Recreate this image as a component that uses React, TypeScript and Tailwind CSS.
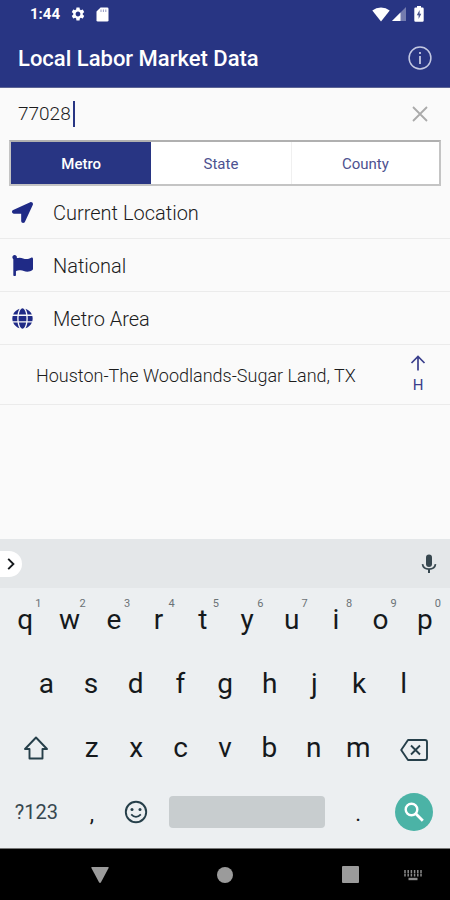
import { useState } from 'react';
import { FaFlag, FaGlobe, FaLocationArrow } from 'react-icons/fa';
import { MdSettings } from 'react-icons/md';

const tabs = ['Metro', 'State', 'County'];

const places = [
  { label: 'Current Location', icon: FaLocationArrow },
  { label: 'National', icon: FaFlag },
  { label: 'Metro Area', icon: FaGlobe },
];

const topRow = [
  ['q', '1'],
  ['w', '2'],
  ['e', '3'],
  ['r', '4'],
  ['t', '5'],
  ['y', '6'],
  ['u', '7'],
  ['i', '8'],
  ['o', '9'],
  ['p', '0'],
];
const middleRow = ['a', 's', 'd', 'f', 'g', 'h', 'j', 'k', 'l'];
const bottomRow = ['z', 'x', 'c', 'v', 'b', 'n', 'm'];

function StatusBar() {
  return (
    <div className="flex h-7 items-center justify-between pl-[30px] pr-[26px]">
      <div className="flex items-center">
        <span className="text-[15px] leading-5 font-bold">1:44</span>
        <MdSettings className="ml-2.5 size-4" />
        <svg viewBox="0 0 13 15" className="ml-2.5 h-[15px] w-[13px]" fill="currentColor">
          <path d="M4.6 0.5H11.2Q12.5 0.5 12.5 1.8V13.2Q12.5 14.5 11.2 14.5H1.8Q0.5 14.5 0.5 13.2V4.6Z" />
          <path d="M5 2.5V5M7.4 2.5V5M9.8 2.5V5" stroke="#283583" strokeWidth="0.5" />
        </svg>
      </div>
      <div className="flex items-center">
        <svg viewBox="0 0 18 15" className="h-[15px] w-[18px]" fill="currentColor">
          <path d="M9 14.5L0.3 3.4Q4 0.4 9 0.4T17.7 3.4Z" />
        </svg>
        <svg viewBox="0 0 14 14" className="ml-0.5 h-3.5 w-3.5" fill="currentColor">
          <path d="M14 0V14H0Z" opacity="0.35" />
          <path d="M8.5 5.5V14H0Z" />
        </svg>
        <svg viewBox="0 0 10 16" className="ml-2 h-4 w-2.5" fill="currentColor">
          <path d="M3 0H7V1.6H8.5Q9.7 1.6 9.7 2.8V14.6Q9.7 15.8 8.5 15.8H1.5Q0.3 15.8 0.3 14.6V2.8Q0.3 1.6 1.5 1.6H3Z" />
          <path d="M5.6 4L2.8 9.3H4.6V13L7.3 7.7H5.6Z" fill="#4b568f" />
        </svg>
      </div>
    </div>
  );
}

function AppBar() {
  return (
    <header className="border-b border-[#5c6494] bg-[#283583] text-white">
      <StatusBar />
      <div className="flex h-[59px] items-center justify-between px-[18px]">
        <h1 className="pt-0.5 text-[22px] leading-7 font-medium">Local Labor Market Data</h1>
        <button type="button" aria-label="About" className="text-[#c3c8e2]">
          <svg viewBox="0 0 24 24" className="size-6" fill="none" stroke="currentColor">
            <circle cx="12" cy="12" r="10.9" strokeWidth="1.5" />
            <path d="M12 10V18" strokeWidth="1.8" />
            <path d="M12 6V8" strokeWidth="1.8" />
          </svg>
        </button>
      </div>
    </header>
  );
}

function Keyboard({ onKey, onDelete }: { onKey: (key: string) => void; onDelete: () => void }) {
  return (
    <section aria-label="Keyboard" className="bg-[#eceff1] text-[#15191c]">
      <div className="flex h-[49px] items-center justify-between bg-[#e4e7e9] pr-3">
        <button
          type="button"
          aria-label="Expand toolbar"
          className="flex h-[26px] w-[22px] items-center justify-center rounded-r-full bg-white"
        >
          <svg viewBox="0 0 8 12" className="h-3 w-2" fill="none" stroke="currentColor" strokeWidth="1.9">
            <path d="M1.2 0.8L6.4 6L1.2 11.2" />
          </svg>
        </button>
        <button type="button" aria-label="Voice input" className="text-[#37474f]">
          <svg viewBox="0 0 18 20" className="h-5 w-[18px]" fill="none" stroke="currentColor">
            <path d="M9 3.5V10" strokeWidth="6" strokeLinecap="round" />
            <path d="M2.5 10.2Q3.2 15.2 9 15.2T15.5 10.2" strokeWidth="1.7" />
            <path d="M9 15V19" strokeWidth="2" />
          </svg>
        </button>
      </div>

      <div className="px-[3px] pb-1 text-[28px] leading-8">
        <div className="grid h-16 grid-cols-10">
          {topRow.map(([key, hint]) => (
            <button key={key} type="button" className="relative" onClick={() => onKey(key)}>
              {key}
              <span className="absolute top-2.5 right-1.5 text-[11px] leading-3 text-[#6b7276]">{hint}</span>
            </button>
          ))}
        </div>
        <div className="grid h-16 grid-cols-9 px-[21px]">
          {middleRow.map((key) => (
            <button key={key} type="button" onClick={() => onKey(key)}>
              {key}
            </button>
          ))}
        </div>
        <div className="grid h-16 grid-cols-20">
          <button type="button" aria-label="Shift" className="col-span-3 flex items-center justify-center text-[#263f4a]">
            <svg viewBox="0 0 26 24" className="h-6 w-[26px]" fill="none" stroke="currentColor" strokeWidth="1.9">
              <path d="M13 1.5L24 13H19.5V22.5H6.5V13H2Z" strokeLinejoin="round" />
            </svg>
          </button>
          {bottomRow.map((key) => (
            <button key={key} type="button" className="col-span-2" onClick={() => onKey(key)}>
              {key}
            </button>
          ))}
          <button
            type="button"
            aria-label="Delete"
            className="col-span-3 flex items-center justify-center pt-1 text-[#263f4a]"
            onClick={onDelete}
          >
            <svg viewBox="0 0 28 22" className="h-[22px] w-7" fill="none" stroke="currentColor" strokeWidth="1.9">
              <path d="M8 1H25Q27 1 27 3V19Q27 21 25 21H8L1.2 11Z" strokeLinejoin="round" />
              <path d="M11 6.5L20 15.5M20 6.5L11 15.5" />
            </svg>
          </button>
        </div>
        <div className="grid h-16 grid-cols-20 items-center">
          <button type="button" className="col-span-3 text-[20px] text-[#37474f]">
            ?123
          </button>
          <button type="button" className="col-span-2 pt-1 text-[22px]" onClick={() => onKey(',')}>
            ,
          </button>
          <button type="button" aria-label="Emoji" className="col-span-2 flex justify-center text-[#263f4a]">
            <svg viewBox="0 0 24 24" className="size-6" fill="none" stroke="currentColor">
              <circle cx="12" cy="12" r="10.2" strokeWidth="1.9" />
              <circle cx="8" cy="9.5" r="1.5" fill="currentColor" stroke="none" />
              <circle cx="16" cy="9.5" r="1.5" fill="currentColor" stroke="none" />
              <path d="M7.2 14.3Q12 19.3 16.8 14.3" strokeWidth="1.8" />
            </svg>
          </button>
          <button
            type="button"
            aria-label="Space"
            className="col-span-8 mx-[11px] h-8 rounded-sm bg-[#c8cdcf]"
            onClick={() => onKey(' ')}
          />
          <button type="button" className="col-span-2 pt-1 text-[22px]" onClick={() => onKey('.')}>
            .
          </button>
          <div className="col-span-3 flex justify-center">
            <button
              type="button"
              aria-label="Search"
              className="flex size-[38px] items-center justify-center rounded-full bg-[#4bb3a6] text-white"
            >
              <svg viewBox="0 0 20 20" className="size-5" fill="none" stroke="currentColor" strokeWidth="2.4">
                <circle cx="7.5" cy="7.5" r="5.8" />
                <path d="M11.8 11.8L18.8 18.8" strokeWidth="2.8" />
              </svg>
            </button>
          </div>
        </div>
      </div>
    </section>
  );
}

function NavBar() {
  return (
    <nav className="grid h-[52px] grid-cols-18 items-center border-t border-[#777] bg-black text-[#9b9b9b]">
      <button type="button" aria-label="Back" className="col-span-4 col-start-3 flex justify-center">
        <svg viewBox="0 0 18 16" className="h-4 w-[18px]" fill="currentColor">
          <path d="M0.8 0H17.2Q18 0 17.6 0.9L10 15.2Q9 16.6 8 15.2L0.4 0.9Q0 0 0.8 0Z" />
        </svg>
      </button>
      <button type="button" aria-label="Home" className="col-span-4 col-start-8 flex justify-center">
        <span className="size-4 rounded-full bg-current" />
      </button>
      <button type="button" aria-label="Recent apps" className="col-span-4 col-start-13 flex justify-center">
        <span className="size-[17px] rounded-[1px] bg-current" />
      </button>
      <button type="button" aria-label="Switch keyboard" className="col-span-1 col-start-17 flex justify-center">
        <svg viewBox="0 0 18 12" className="h-3 w-[18px]" fill="none" stroke="#8a8a8a">
          <path d="M1 1V8M4.2 1V8M7.4 1V8M10.6 1V8M13.8 1V8M17 1V8" strokeWidth="1.5" strokeDasharray="3 0.5" />
          <path d="M4.5 10H13.5" strokeWidth="2.4" />
        </svg>
      </button>
    </nav>
  );
}

export default function App() {
  const [query, setQuery] = useState('77028');
  const [activeTab, setActiveTab] = useState('Metro');

  return (
    <div className="flex min-h-screen flex-col bg-[#fafafa] font-[Roboto,sans-serif] text-[#1c1c1c]">
      <AppBar />

      <main className="flex-1">
        {/* Search field */}
        <div className="flex h-[52px] items-center pl-[18px] pr-[22px]">
          <input
            aria-label="Search by ZIP code"
            className="field-sizing-content text-[19px] leading-6 font-light caret-transparent outline-none"
            value={query}
            onChange={(e) => setQuery(e.target.value)}
          />
          <span className="ml-0.5 h-[26px] w-0.5 bg-[#283583]" />
          <button type="button" aria-label="Clear" className="ml-auto text-[#aaa]" onClick={() => setQuery('')}>
            <svg viewBox="0 0 16 16" className="size-4" fill="none" stroke="currentColor" strokeWidth="1.8">
              <path d="M1 1L15 15M15 1L1 15" />
            </svg>
          </button>
        </div>

        {/* Area type */}
        <div className="mx-[9px] grid h-[46px] grid-cols-[20fr_20fr_21fr] border-2 border-[#c4c4c4] border-t-[#b0b0b0] bg-white">
          {tabs.map((tab) => (
            <button
              key={tab}
              type="button"
              aria-pressed={tab === activeTab}
              onClick={() => setActiveTab(tab)}
              className={
                tab === activeTab
                  ? 'bg-[#283583] pt-0.5 text-[15px] font-medium text-white'
                  : 'border-r border-[#f0f0f0] pt-0.5 text-[15px] text-[#4d5290] last:border-r-0'
              }
            >
              {tab}
            </button>
          ))}
        </div>

        <ul>
          {places.map(({ label, icon: Icon }) => (
            <li key={label} className="border-b border-[#ebebeb]">
              <button type="button" className="flex h-[52px] w-full items-center pl-3 text-left">
                <Icon className="size-[21px] text-[#1f2a86]" />
                <span className="ml-5 pt-0.5 text-[20px] leading-6 font-light">{label}</span>
              </button>
            </li>
          ))}
          <li className="flex h-[60px] items-center justify-between border-b border-[#ebebeb] pl-9 pr-6">
            <a href="#houston" className="pt-0.5 text-[18px] leading-6 font-light">
              Houston-The Woodlands-Sugar Land, TX
            </a>
            <button type="button" className="flex flex-col items-center gap-1 text-[#3a3f8c]" aria-label="Hierarchy H">
              <svg viewBox="0 0 16 16" className="size-4" fill="none" stroke="currentColor" strokeWidth="1.7">
                <path d="M8 15.5V2M1.5 8L8 1.5L14.5 8" />
              </svg>
              <span className="text-[15px] leading-5">H</span>
            </button>
          </li>
        </ul>
      </main>

      <Keyboard onKey={(key) => setQuery((prev) => prev + key)} onDelete={() => setQuery((prev) => prev.slice(0, -1))} />
      <NavBar />
    </div>
  );
}
